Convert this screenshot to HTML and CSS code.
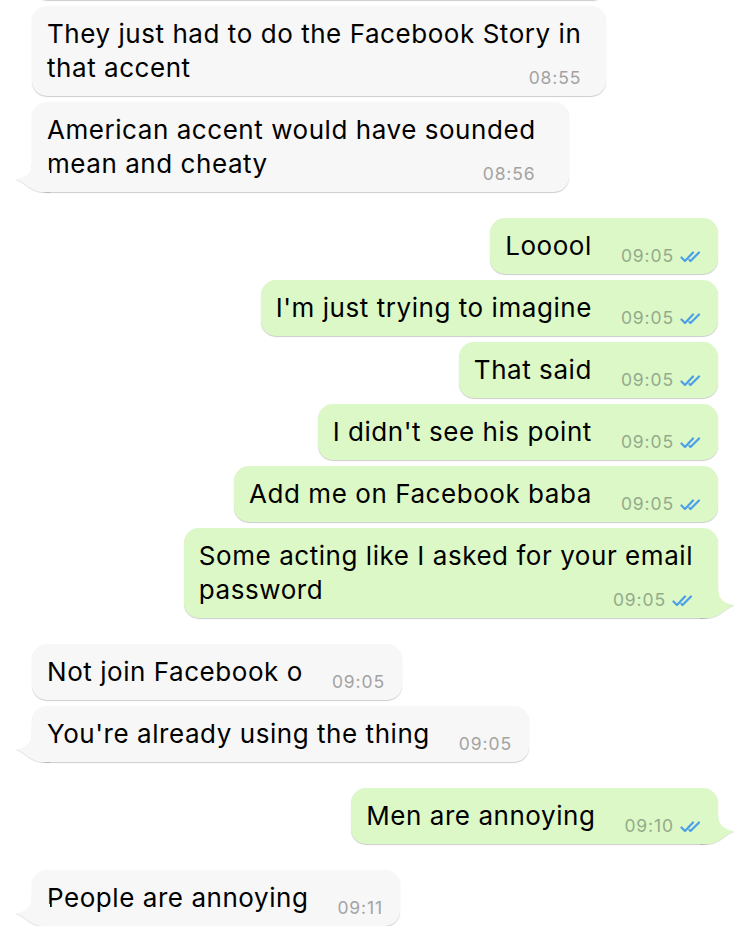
FILE: index.html
```html
<!DOCTYPE html>
<html>
<head>
    <title>Chat</title>
    <link rel="stylesheet" href="styles.css">
</head>
<body>
    <div class="chat">

        <!-- Incoming: first group -->
        <div class="group in">
            <div class="bubble peek"></div>
            <div class="bubble wide">
                <div class="line">They just had to do the Facebook Story in</div>
                <div class="row"><span class="text">that accent</span><span class="meta"><span class="time">08:55</span></span></div>
            </div>
            <div class="bubble wider tail">
                <div class="line">American accent would have sounded</div>
                <div class="row"><span class="text">mean and cheaty</span><span class="meta"><span class="time">08:56</span></span></div>
                <svg class="nub" viewBox="0 0 36 34" width="36" height="34"><path d="M18 4 C18 15 12 20 1 21 C10 23 16 33 27 34 L36 34 L36 12 L18 12 Z"/></svg>
            </div>
        </div>

        <!-- Outgoing -->
        <div class="group out">
            <div class="bubble">
                <div class="row"><span class="text">Looool</span><span class="meta"><span class="time">09:05</span><svg class="ticks" viewBox="0 0 21 13" width="21" height="13"><path d="M1.5 7.5 L5 11 L13 2.5 M9.5 10 L10.5 11 L19 2.5"/></svg></span></div>
            </div>
            <div class="bubble">
                <div class="row"><span class="text">I'm just trying to imagine</span><span class="meta"><span class="time">09:05</span><svg class="ticks" viewBox="0 0 21 13" width="21" height="13"><path d="M1.5 7.5 L5 11 L13 2.5 M9.5 10 L10.5 11 L19 2.5"/></svg></span></div>
            </div>
            <div class="bubble">
                <div class="row"><span class="text">That said</span><span class="meta"><span class="time">09:05</span><svg class="ticks" viewBox="0 0 21 13" width="21" height="13"><path d="M1.5 7.5 L5 11 L13 2.5 M9.5 10 L10.5 11 L19 2.5"/></svg></span></div>
            </div>
            <div class="bubble">
                <div class="row"><span class="text">I didn't see his point</span><span class="meta"><span class="time">09:05</span><svg class="ticks" viewBox="0 0 21 13" width="21" height="13"><path d="M1.5 7.5 L5 11 L13 2.5 M9.5 10 L10.5 11 L19 2.5"/></svg></span></div>
            </div>
            <div class="bubble">
                <div class="row"><span class="text">Add me on Facebook baba</span><span class="meta"><span class="time">09:05</span><svg class="ticks" viewBox="0 0 21 13" width="21" height="13"><path d="M1.5 7.5 L5 11 L13 2.5 M9.5 10 L10.5 11 L19 2.5"/></svg></span></div>
            </div>
            <div class="bubble wide tail">
                <div class="line">Some acting like I asked for your email</div>
                <div class="row"><span class="text">password</span><span class="meta"><span class="time">09:05</span><svg class="ticks" viewBox="0 0 21 13" width="21" height="13"><path d="M1.5 7.5 L5 11 L13 2.5 M9.5 10 L10.5 11 L19 2.5"/></svg></span></div>
                <svg class="nub" viewBox="0 0 36 34" width="36" height="34"><path d="M18 4 C18 15 24 20 35 21 C26 23 20 33 9 34 L0 34 L0 12 L18 12 Z"/></svg>
            </div>
        </div>

        <!-- Incoming -->
        <div class="group in">
            <div class="bubble">
                <div class="row"><span class="text">Not join Facebook o</span><span class="meta"><span class="time">09:05</span></span></div>
            </div>
            <div class="bubble tail">
                <div class="row"><span class="text">You're already using the thing</span><span class="meta"><span class="time">09:05</span></span></div>
                <svg class="nub" viewBox="0 0 36 34" width="36" height="34"><path d="M18 4 C18 15 12 20 1 21 C10 23 16 33 27 34 L36 34 L36 12 L18 12 Z"/></svg>
            </div>
        </div>

        <!-- Outgoing -->
        <div class="group out">
            <div class="bubble tail">
                <div class="row"><span class="text">Men are annoying</span><span class="meta"><span class="time">09:10</span><svg class="ticks" viewBox="0 0 21 13" width="21" height="13"><path d="M1.5 7.5 L5 11 L13 2.5 M9.5 10 L10.5 11 L19 2.5"/></svg></span></div>
                <svg class="nub" viewBox="0 0 36 34" width="36" height="34"><path d="M18 4 C18 15 24 20 35 21 C26 23 20 33 9 34 L0 34 L0 12 L18 12 Z"/></svg>
            </div>
        </div>

        <!-- Incoming -->
        <div class="group in">
            <div class="bubble tail">
                <div class="row"><span class="text">People are annoying</span><span class="meta"><span class="time">09:11</span></span></div>
                <svg class="nub" viewBox="0 0 36 34" width="36" height="34"><path d="M18 4 C18 15 12 20 1 21 C10 23 16 33 27 34 L36 34 L36 12 L18 12 Z"/></svg>
            </div>
        </div>

    </div>
</body>
</html>
```

FILE: styles.css
```css
html, body {
    margin: 0;
    background: #fff;
}
body {
    font-family: Inter, "Liberation Sans", sans-serif;
    color: #000;
    overflow: hidden;
}
.chat {
    display: flex;
    flex-direction: column;
    gap: 26px;
    margin-top: -56px;
    padding: 0 18px 0 32px;
}
.group {
    display: flex;
    flex-direction: column;
    gap: 6px;
}
.group.in {
    align-items: flex-start;
}
.group.out {
    align-items: flex-end;
}
.bubble {
    position: relative;
    padding: 11px 17px 11px 15px;
    border-radius: 15px;
    font-size: 26px;
    line-height: 34px;
    letter-spacing: 0.55px;
    box-shadow: 0 1px 1px rgba(0,0,0,0.2);
}
.bubble.peek {
    width: 544px;
    height: 34px;
}
.in .bubble {
    background: #f7f7f7;
}
.out .bubble {
    background: #dcf8c6;
}
.bubble.wide {
    padding-right: 25px;
}
.bubble.wider {
    padding-right: 33px;
}
.row {
    display: flex;
    align-items: flex-end;
    justify-content: space-between;
}
.text {
    white-space: nowrap;
}
.line {
    white-space: nowrap;
}
.meta {
    display: flex;
    align-items: center;
    gap: 6px;
    margin-left: 29px;
    margin-bottom: -3px;
    font-size: 17.5px;
    line-height: 20px;
    letter-spacing: 0.9px;
    white-space: nowrap;
}
.in .time {
    color: #a3a3a3;
}
.out .time {
    color: #93ab8c;
}
.ticks {
    fill: none;
    stroke: #4a9eea;
    stroke-width: 2.2;
    stroke-linecap: round;
    stroke-linejoin: round;
}
.nub {
    position: absolute;
    bottom: 0;
    filter: drop-shadow(0 1px 0 rgba(0,0,0,0.12));
}
.in .nub {
    left: -18px;
    fill: #f7f7f7;
}
.out .nub {
    right: -18px;
    fill: #dcf8c6;
}
```
